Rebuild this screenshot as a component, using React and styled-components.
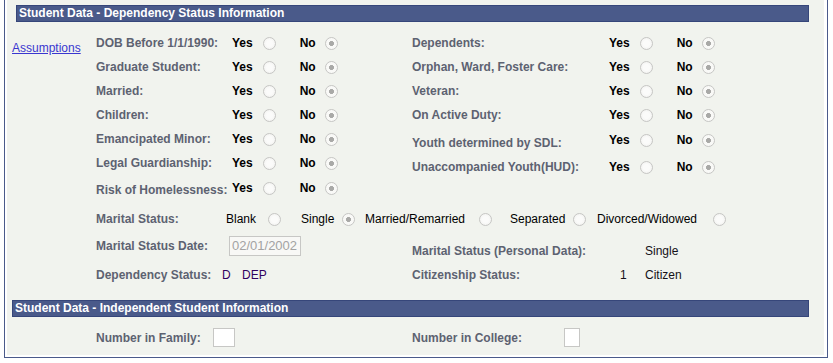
import React from 'react'
import styled, { createGlobalStyle } from 'styled-components'

const GlobalStyle = createGlobalStyle`
  body {
    margin: 0;
    background: #fff;
    font-family: "Liberation Sans", Arial, sans-serif;
    font-size: 12px;
  }
`

const Frame = styled.div`
  margin-left: 4px;
  width: 824px;
  height: 358px;
  box-sizing: border-box;
  border: 1px solid #4a5a8a;
  border-top: none;
  padding: 0 3px 2px 2px;
  background: #fff;
`

const Panel = styled.div`
  height: 100%;
  box-sizing: border-box;
  padding-top: 5px;
  background: #f1f3ee;
`

const Header = styled.div`
  height: 17px;
  box-sizing: border-box;
  margin: ${({ $mt }) => $mt || 0}px 15px 0 ${({ $indent }) => $indent}px;
  padding-left: 2px;
  background: #4a5a8a;
  border: 1px solid #36467a;
  color: #fff;
  font-weight: bold;
  font-size: 12px;
  line-height: 15px;
  white-space: nowrap;
`

const Section = styled.div`
  display: flex;
  margin-top: ${({ $mt }) => $mt}px;
  padding-left: ${({ $pl }) => $pl || 0}px;
`

const LinkCol = styled.div`
  width: 89px;
  box-sizing: border-box;
  padding: 10px 0 0 5px;
`

const Link = styled.a`
  color: #3a36d0;
  text-decoration: underline;
  line-height: 14px;
  cursor: pointer;
`

const Main = styled.div`
  display: flex;
  flex-direction: column;
  flex: 1;
`

const Line = styled.div`
  display: grid;
  grid-template-columns: ${({ $cols }) => $cols};
  align-items: start;
  height: ${({ $h }) => $h}px;
  margin-top: ${({ $mt }) => $mt || 0}px;
`

const Cell = styled.div`
  display: flex;
  align-items: center;
  padding-top: ${({ $top }) => ($top === undefined ? 5 : $top)}px;
  line-height: 14px;
  white-space: nowrap;
`

const Label = styled(Cell)`
  color: #5d6271;
  font-weight: bold;
  width: ${({ $w }) => ($w ? `${$w}px` : 'auto')};
  flex: none;
`

const Value = styled(Cell)`
  color: ${({ $tone }) => $tone || '#141018'};
`

const Choice = styled.span`
  margin-left: ${({ $gap }) => $gap || 0}px;
  color: #000;
  font-weight: ${({ $bold }) => ($bold ? 'bold' : 'normal')};
`

const Radio = styled.span`
  display: inline-block;
  flex: none;
  width: 13px;
  height: 13px;
  box-sizing: border-box;
  margin-left: ${({ $gap }) => $gap}px;
  border-radius: 50%;
  border: 1px solid #c6c6c4;
  background: ${({ $checked }) =>
    $checked
      ? 'radial-gradient(circle, #a9a9a7 0 2.2px, #f9f9f7 2.8px)'
      : 'radial-gradient(circle, #fbfbfa 0 3px, #f3f3f1 6px)'};
`

const Option = styled.div`
  display: flex;
  align-items: center;
  width: ${({ $w }) => ($w ? `${$w}px` : 'auto')};
  flex: none;
`

const OptionRow = styled.div`
  display: flex;
  align-items: center;
  height: 14px;
  margin-top: ${({ $mt }) => $mt}px;
  margin-bottom: ${({ $mb }) => $mb}px;
  line-height: 14px;
  white-space: nowrap;
`

const Box = styled.div`
  box-sizing: border-box;
  width: ${({ $w }) => $w}px;
  height: ${({ $h }) => $h}px;
  margin-top: ${({ $top }) => $top || 0}px;
  border: 1px solid #c7c7c5;
  background: ${({ $dim }) => ($dim ? '#f8f8f6' : '#fff')};
  color: #a3a3a3;
  font-size: 13px;
  line-height: 18px;
  padding-left: 2px;
`

const YesNo = ({ top }) => (
  <Cell $top={top}>
    <Choice $bold>Yes</Choice>
    <Radio $gap={10} />
    <Choice $bold $gap={24}>No</Choice>
    <Radio $gap={9} $checked />
  </Cell>
)

const rows = [
  ['DOB Before 1/1/1990:', 'Dependents:'],
  ['Graduate Student:', 'Orphan, Ward, Foster Care:'],
  ['Married:', 'Veteran:'],
  ['Children:', 'On Active Duty:'],
  ['Emancipated Minor:', 'Youth determined by SDL:', 9, 6],
  ['Legal Guardianship:', 'Unaccompanied Youth(HUD):', 9, 9],
]

const marital = [
  ['Blank', 75, 12, false],
  ['Single', 64, 8, true],
  ['Married/Remarried', 145, 14, false],
  ['Separated', 87, 8, false],
  ['Divorced/Widowed', 0, 16, false],
]

const App = () => {
  return (
    <>
      <GlobalStyle />
      <Frame>
        <Panel>
          <Header $indent={9}>Student Data - Dependency Status Information</Header>
          <Section $mt={9}>
            <LinkCol>
              <Link>Assumptions</Link>
            </LinkCol>
            <Main>
              {rows.map(([left, right, labelTop, yesTop]) => (
                <Line key={left} $cols="136px 180px 197px 1fr" $h={24}>
                  <Label>{left}</Label>
                  <YesNo />
                  <Label $top={labelTop}>{right}</Label>
                  <YesNo top={yesTop} />
                </Line>
              ))}
              <Line $cols="136px 180px" $h={26}>
                <Label $top={8}>Risk of Homelessness:</Label>
                <YesNo top={6} />
              </Line>
              <OptionRow $mt={11} $mb={5}>
                <Label $top={0} $w={130}>Marital Status:</Label>
                {marital.map(([text, w, gap, checked]) => (
                  <Option key={text} $w={w}>
                    <Choice>{text}</Choice>
                    <Radio $gap={gap} $checked={checked} />
                  </Option>
                ))}
              </OptionRow>
              <Line $cols="133px 183px 233px 1fr" $h={25}>
                <Label $top={8}>Marital Status Date:</Label>
                <Box $w={72} $h={20} $top={5} $dim>02/01/2002</Box>
                <Label $top={13}>Marital Status (Personal Data):</Label>
                <Value $top={13}>Single</Value>
              </Line>
              <Line $cols="126px 20px 170px 208px 25px 1fr" $h={30}>
                <Label $top={12}>Dependency Status:</Label>
                <Value $top={12} $tone="#300060">D</Value>
                <Value $top={12} $tone="#300060">DEP</Value>
                <Label $top={12}>Citizenship Status:</Label>
                <Value $top={12}>1</Value>
                <Value $top={12}>Citizen</Value>
              </Line>
            </Main>
          </Section>
          <Header $indent={5} $mt={14}>Student Data - Independent Student Information</Header>
          <Section $mt={11} $pl={89}>
            <Line $cols="117px 22px 177px 152px 1fr" $h={19}>
              <Label $top={3}>Number in Family:</Label>
              <Box $w={22} $h={19} />
              <span />
              <Label $top={3}>Number in College:</Label>
              <Box $w={16} $h={19} />
            </Line>
          </Section>
        </Panel>
      </Frame>
    </>
  )
}

export default App
